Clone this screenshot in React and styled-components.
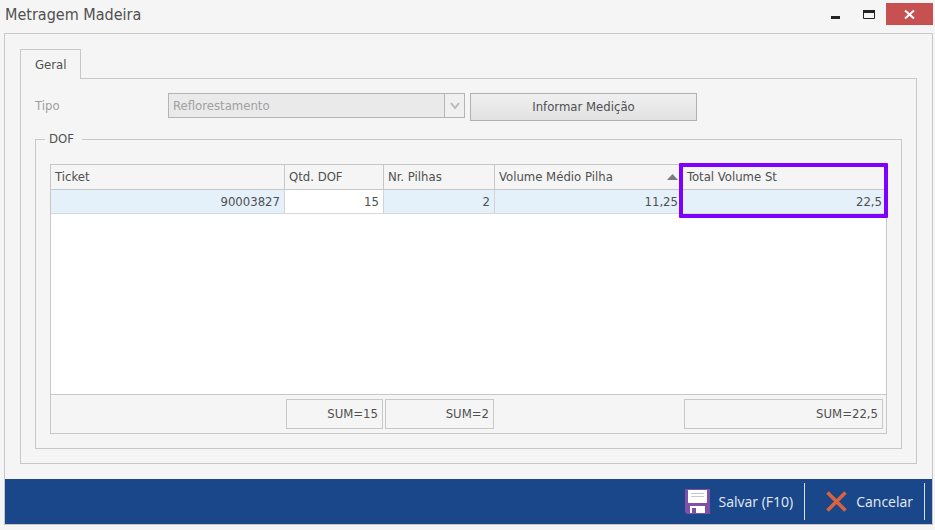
import React from "react";
import styled, { createGlobalStyle } from "styled-components";

const line = "#c8c8c8";
const surface = "#f5f5f5";
const text = "#505050";

const GlobalStyle = createGlobalStyle`
  * { box-sizing: border-box; }
  body {
    margin: 0;
    background: ${surface};
    color: ${text};
    font-family: "DejaVu Sans Condensed", "Noto Sans", sans-serif;
    font-size: 13px;
    line-height: 16px;
  }
  button, select { font: inherit; color: inherit; }
`;

const Window = styled.div`
  display: flex;
  flex-direction: column;
  min-height: 100vh;
  padding: 0 2px 5px 4px;
`;

const TitleBar = styled.header`
  display: flex;
  align-items: flex-start;
  justify-content: space-between;
  height: 33px;
  padding-top: 3px;
`;

const Title = styled.h1`
  margin: 1px 0 0 1px;
  font-size: 16px;
  line-height: 22px;
  font-weight: 400;
`;

const WindowControls = styled.div`
  display: flex;
`;

const ControlButton = styled.button`
  display: flex;
  align-items: center;
  justify-content: center;
  width: ${(p) => (p.$close ? 47 : 34)}px;
  height: 22px;
  padding: 0;
  border: 0;
  background: ${(p) => (p.$close ? "#c75050" : "transparent")};
`;

const Frame = styled.div`
  display: flex;
  flex-direction: column;
  flex: 1;
  border: 1px solid ${line};
`;

const Content = styled.main`
  display: flex;
  flex-direction: column;
  flex: 1;
  padding: 15px;
`;

const TabList = styled.div`
  display: flex;
`;

const Tab = styled.button`
  z-index: 1;
  height: 30px;
  margin-bottom: -1px;
  padding: 0 14px;
  border: 1px solid ${line};
  border-bottom: 0;
  background: ${surface};
`;

const TabPanel = styled.section`
  display: flex;
  flex-direction: column;
  flex: 1;
  padding: 14px;
  border: 1px solid ${line};
`;

const Field = styled.div`
  display: flex;
  align-items: flex-start;
`;

const FieldLabel = styled.label`
  width: 133px;
  color: #a0a0a0;
  line-height: 26px;
`;

const SelectBox = styled.div`
  display: flex;
  width: 297px;
  height: 25px;
  margin-right: 5px;
  border: 1px solid #b4b4b4;
  background: #eaeaea;
`;

const Select = styled.select`
  flex: 1;
  min-width: 0;
  padding: 0 4px;
  border: 0;
  background: transparent;
  color: #a0a0a0;
  opacity: 1;
  appearance: none;
`;

const SelectArrow = styled.span`
  display: flex;
  align-items: center;
  justify-content: center;
  width: 20px;
  border-left: 1px solid #b4b4b4;
  background: #f0f0f0;
`;

const ActionButton = styled.button`
  width: 227px;
  height: 28px;
  padding: 0;
  border: 1px solid #b0b0b0;
  background: linear-gradient(#f0f0f0, #e2e2e2);
`;

const Group = styled.fieldset`
  flex: 1;
  min-width: 0;
  margin: 10px 0 0;
  padding: 17px 14px 14px;
  border: 1px solid ${line};
`;

const Legend = styled.legend`
  margin-left: -5px;
  padding: 0 8px 0 4px;
`;

const Grid = styled.div`
  position: relative;
  border: 1px solid ${line};
`;

const Table = styled.table`
  width: 100%;
  table-layout: fixed;
  border-collapse: separate;
  border-spacing: 0;
`;

const Column = styled.col`
  width: ${(p) => (p.$width ? `${p.$width}px` : "auto")};
`;

const HeadCell = styled.th`
  height: 25px;
  padding: 0 4px;
  border-right: 1px solid ${line};
  border-bottom: 1px solid ${line};
  font-weight: 400;
  text-align: left;
  white-space: nowrap;
  &:last-child { border-right: 0; }
`;

const HeadContent = styled.div`
  display: flex;
  align-items: center;
  justify-content: space-between;
`;

const Cell = styled.td`
  height: 24px;
  padding: 0 4px;
  border-right: 1px solid #d0d4d8;
  border-bottom: 1px solid #d8d8d8;
  background: ${(p) => (p.$editable ? "#ffffff" : "#e4f1fa")};
  text-align: right;
  &:last-child { border-right: 0; }
`;

const EmptyArea = styled.td`
  height: 181px;
  padding: 0;
  border-bottom: 1px solid ${line};
  background: #ffffff;
`;

const FootCell = styled.td`
  height: 38px;
  padding: 0 1px;
`;

const Sum = styled.div`
  height: 30px;
  margin-right: ${(p) => (p.$last ? 2 : 0)}px;
  padding: 0 4px;
  border: 1px solid ${line};
  line-height: 28px;
  text-align: right;
`;

const Highlight = styled.div`
  position: absolute;
  top: -2px;
  right: -2px;
  width: 209px;
  height: 55px;
  border: 4px solid #8000ff;
  border-radius: 1px;
  pointer-events: none;
`;

const CommandBar = styled.footer`
  display: flex;
  justify-content: flex-end;
  height: 45px;
  padding: 4px 7px 4px 0;
  background: #1a4789;
`;

const Command = styled.button`
  display: flex;
  align-items: center;
  gap: 9px;
  padding: 0 11px 0 21px;
  border: 0;
  border-right: 1px solid #d5deea;
  background: transparent;
  color: #e4ebf5;
  font-family: "Open Sans", "Noto Sans", sans-serif;
  font-size: 14px;
`;

const SaveIcon = () => (
  <svg width="25" height="25" viewBox="0 0 25 25" aria-hidden="true">
    <path d="M0 0H25V25H2L0 23Z" fill="#8050a8" />
    <path d="M3 1H22V13Q22 14 21 14H4Q3 14 3 13Z" fill="#fff" />
    <path d="M6 4.5H19M6 7.5H19" stroke="#c9c9c9" />
    <path d="M5 17H20V24H5Z" fill="#fff" />
    <path d="M7 19H11V24H7Z" fill="#8050a8" />
  </svg>
);

const CancelIcon = () => (
  <svg width="21" height="21" viewBox="0 0 21 21" aria-hidden="true">
    <path d="M1.5 1.5L19.5 19.5M19.5 1.5L1.5 19.5" stroke="#d9623f" strokeWidth="3.6" />
  </svg>
);

const columns = [
  { key: "ticket", title: "Ticket", value: "90003827" },
  { key: "dof", title: "Qtd. DOF", value: "15", sum: "SUM=15", width: 99, editable: true },
  { key: "pilhas", title: "Nr. Pilhas", value: "2", sum: "SUM=2", width: 111 },
  { key: "medio", title: "Volume Médio Pilha", value: "11,25", width: 188, sorted: true },
  { key: "total", title: "Total Volume St", value: "22,5", sum: "SUM=22,5", width: 203 },
];

export default function App() {
  return (
    <>
      <GlobalStyle />
      <Window>
        <TitleBar>
          <Title>Metragem Madeira</Title>
          <WindowControls>
            <ControlButton aria-label="Minimizar">
              <svg width="9" height="9"><path d="M0 6H9V9H0Z" fill="#222" /></svg>
            </ControlButton>
            <ControlButton aria-label="Maximizar">
              <svg width="12" height="9"><path d="M.5 1V8.5H11.5V1" fill="none" stroke="#222" /><path d="M0 0H12V3H0Z" fill="#222" /></svg>
            </ControlButton>
            <ControlButton $close aria-label="Fechar">
              <svg width="11" height="9"><path d="M1 .5L10 8.5M10 .5L1 8.5" stroke="#fff" strokeWidth="2" /></svg>
            </ControlButton>
          </WindowControls>
        </TitleBar>
        <Frame>
          <Content>
            <TabList role="tablist">
              <Tab role="tab" aria-selected="true" id="tab-geral" aria-controls="panel-geral">Geral</Tab>
            </TabList>
            <TabPanel role="tabpanel" id="panel-geral" aria-labelledby="tab-geral">
              <Field>
                <FieldLabel htmlFor="tipo">Tipo</FieldLabel>
                <SelectBox>
                  <Select id="tipo" disabled defaultValue="Reflorestamento">
                    <option>Reflorestamento</option>
                  </Select>
                  <SelectArrow>
                    <svg width="10" height="8"><path d="M1 1L5 6L9 1" fill="none" stroke="#b8b8b8" strokeWidth="2" /></svg>
                  </SelectArrow>
                </SelectBox>
                <ActionButton>Informar Medição</ActionButton>
              </Field>
              <Group>
                <Legend>DOF</Legend>
                <Grid>
                  <Table>
                    <colgroup>
                      {columns.map((c) => <Column key={c.key} $width={c.width} />)}
                    </colgroup>
                    <thead>
                      <tr>
                        {columns.map((c) => (
                          <HeadCell key={c.key} scope="col" aria-sort={c.sorted ? "ascending" : undefined}>
                            <HeadContent>
                              {c.title}
                              {c.sorted && <svg width="11" height="6" aria-hidden="true"><path d="M0 6L5.5 0L11 6Z" fill="#7c7c7c" /></svg>}
                            </HeadContent>
                          </HeadCell>
                        ))}
                      </tr>
                    </thead>
                    <tbody>
                      <tr>
                        {columns.map((c) => <Cell key={c.key} $editable={c.editable}>{c.value}</Cell>)}
                      </tr>
                      <tr><EmptyArea colSpan={columns.length} /></tr>
                    </tbody>
                    <tfoot>
                      <tr>
                        {columns.map((c) => (
                          <FootCell key={c.key}>{c.sum && <Sum $last={c.key === "total"}>{c.sum}</Sum>}</FootCell>
                        ))}
                      </tr>
                    </tfoot>
                  </Table>
                  <Highlight />
                </Grid>
              </Group>
            </TabPanel>
          </Content>
          <CommandBar>
            <Command><SaveIcon />Salvar (F10)</Command>
            <Command><CancelIcon />Cancelar</Command>
          </CommandBar>
        </Frame>
      </Window>
    </>
  );
}
